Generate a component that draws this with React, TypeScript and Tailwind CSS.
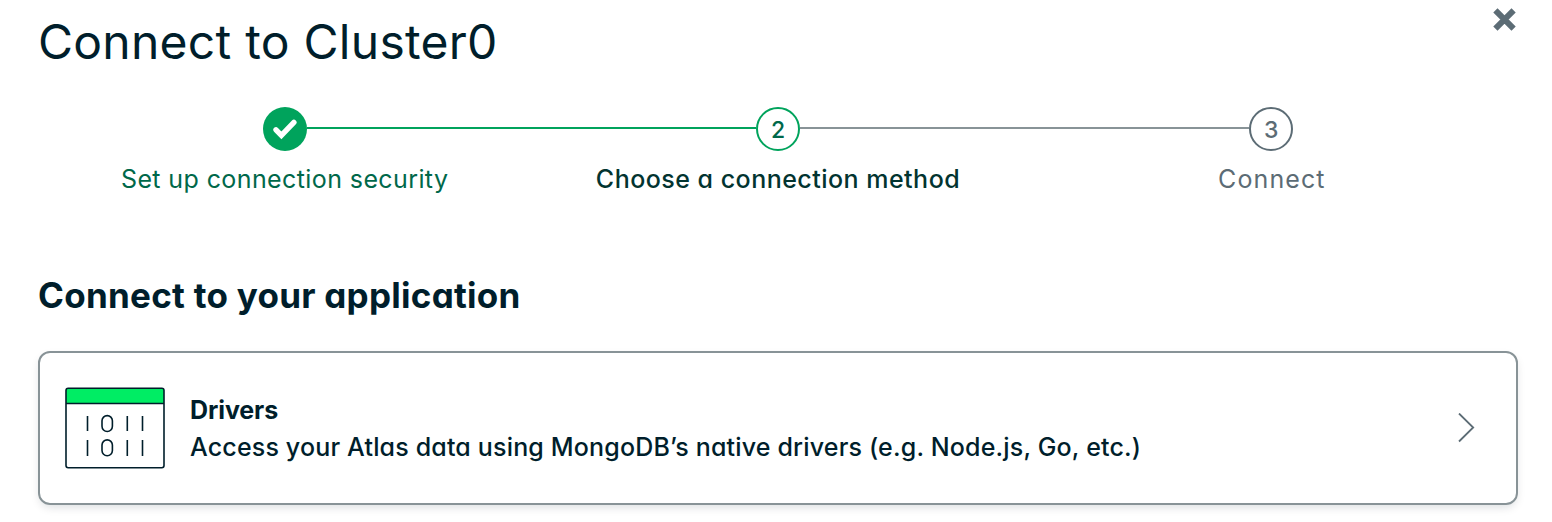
function Check() {
  return (
    <svg width="44" height="44" viewBox="0 0 44 44" fill="none">
      <path d="M13 22.8l5.4 5.6L30.9 15.4" stroke="#fff" strokeWidth="5.4" strokeLinecap="round" />
    </svg>
  );
}

function DriversIcon() {
  return (
    <svg width="102" height="84" viewBox="0 0 102 84" fill="none" className="shrink-0">
      <path d="M2 17.5V4.5Q2 2.3 4.2 2.3H97.8Q100 2.3 100 4.5V17.5Z" fill="#00ED64" />
      <rect x="2" y="2.3" width="98" height="79.5" rx="2.2" stroke="#001E2B" strokeWidth="1.6" />
      <path d="M2 17.5H100" stroke="#001E2B" strokeWidth="1.6" />
      <path d="M23.5 30V45M63.3 30V45M78.5 30V45M23.5 54V70M63.3 54V70M78.5 54V70" stroke="#001E2B" strokeWidth="1.6" />
      <rect x="38" y="29.6" width="10.4" height="15.9" rx="5.2" stroke="#001E2B" strokeWidth="1.6" />
      <rect x="38" y="53.9" width="10.4" height="15.9" rx="5.2" stroke="#001E2B" strokeWidth="1.6" />
    </svg>
  );
}

export default function App() {
  return (
    <div className="h-[522px] w-full overflow-hidden bg-white pr-[34px] pl-[38px] font-['Inter',sans-serif] text-[#001E2B] [font-feature-settings:'cv11']">
      <header className="flex h-[107px] items-start justify-between">
        <h1 className="mt-[12px] text-[48px] leading-[60px] font-normal tracking-[0.26px]">Connect to Cluster0</h1>
        <button aria-label="Close" className="mt-[7px]">
          <svg width="26" height="26" viewBox="0 0 26 26" fill="none">
            <path d="M3.4 3.4L21.6 21.6M21.6 3.4L3.4 21.6" stroke="#5C6C75" strokeWidth="6" />
          </svg>
        </button>
      </header>
      <ol className="grid grid-cols-3">
        <li className="flex flex-col items-center">
          <div className="flex w-full items-start">
            <span className="flex-1" />
            <span className="size-11 rounded-full bg-[#00A35C]">
              <Check />
            </span>
            <span className="mt-5 h-0.5 flex-1 bg-[#00A35C]" />
          </div>
          <span className="mt-3 text-[25px] leading-8 tracking-[0.4px] text-[#00684A]">Set up connection security</span>
        </li>
        <li className="flex flex-col items-center">
          <div className="flex w-full items-start">
            <span className="mt-5 h-0.5 flex-1 bg-[#00A35C]" />
            <span className="flex size-11 items-center justify-center rounded-full border-2 border-[#00A35C] pt-0.5 text-[23px] font-medium text-[#00684A]">2</span>
            <span className="mt-5 h-0.5 flex-1 bg-[#889397]" />
          </div>
          <span className="mt-3 text-[25px] leading-8 font-medium tracking-[0.48px] text-[#023430]">Choose a connection method</span>
        </li>
        <li className="flex flex-col items-center">
          <div className="flex w-full items-start">
            <span className="mt-5 h-0.5 flex-1 bg-[#889397]" />
            <span className="flex size-11 items-center justify-center rounded-full border-2 border-[#5C6C75] pt-0.5 text-[23px] font-medium text-[#5C6C75]">3</span>
            <span className="flex-1" />
          </div>
          <span className="mt-3 pl-px text-[25px] leading-8 tracking-[1.1px] text-[#5C6C75]">Connect</span>
        </li>
      </ol>
      <h2 className="mt-[76px] text-[35px] leading-[48px] font-bold tracking-[0.27px]">Connect to your application</h2>
      <a className="mt-[32px] flex h-[154px] items-center rounded-[12px] border-2 border-[#889397] pr-[40px] pl-[24px] shadow-[0_4px_10px_-2px_rgba(0,30,43,0.15)]">
        <DriversIcon />
        <div className="ml-6 flex-1 pt-px text-[25px] leading-[37px]">
          <div className="font-bold tracking-[-0.1px]">Drivers</div>
          <div className="font-medium tracking-[0.17px] whitespace-nowrap">Access your Atlas data using MongoDB’s native drivers (e.g. Node.js, Go, etc.)</div>
        </div>
        <svg width="18" height="30" viewBox="0 0 18 30" fill="none">
          <path d="M1 0.5L15.2 14.5L1 28.5" stroke="#5C6C75" strokeWidth="1.8" />
        </svg>
      </a>
    </div>
  );
}
